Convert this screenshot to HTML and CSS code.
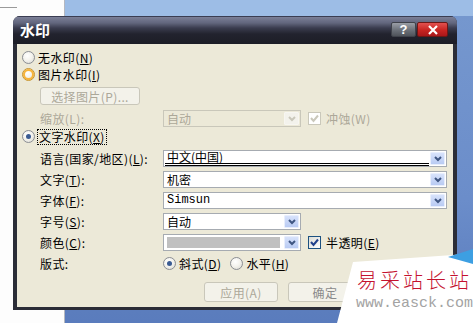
FILE: index.html
```html
<!DOCTYPE html>
<html lang="zh-CN">
<head>
<meta charset="utf-8">
<title>水印</title>
<link rel="stylesheet" href="styles.css">
</head>
<body>
<div class="desk">
  <div class="bgwin"><div class="bgline"></div></div>

  <div class="dialog">
    <div class="titlebar">
      <span class="title">水印</span>
      <div class="tbtns">
        <span class="tb help">?</span>
        <span class="tb close">
          <svg width="12" height="10" viewBox="0 0 12 10"><path d="M2 1 L10 9 M10 1 L2 9" stroke="#fff" stroke-width="2.2"/></svg>
        </span>
      </div>
    </div>

    <div class="body">
      <div class="row radio-row"><span class="radio"></span><span>无水印(<u>N</u>)</span></div>
      <div class="row radio-row"><span class="radio hover"></span><span>图片水印(<u>I</u>)</span></div>
      <div class="pic-row"><span class="btn disabled pic-btn">选择图片(P)...</span></div>

      <div class="row form-row scale-row">
        <span class="lbl dis-text">缩放(L):</span>
        <span class="combo narrow disabled"><span class="val dis-text">自动</span><span class="arrow"><svg width="8" height="6" viewBox="0 0 8 6"><path d="M1 1 L4 4 L7 1" fill="none" stroke="#c9c7ba" stroke-width="2"/></svg></span></span>
        <span class="check disabled"><svg width="11" height="11" viewBox="0 0 11 11"><path d="M2 5 L4.5 8 L9 2.5" fill="none" stroke="#cac8bb" stroke-width="2"/></svg></span>
        <span class="dis-text">冲蚀(W)</span>
      </div>

      <div class="row radio-row text-wm"><span class="radio checked"></span><span class="focus">文字水印(<u>X</u>)</span></div>

      <div class="form">
        <div class="row form-row">
          <span class="lbl">语言(国家/地区)(<u>L</u>):</span>
          <span class="combo wide"><span class="val dbl">中文(中国)</span><span class="arrow"><svg width="8" height="6" viewBox="0 0 8 6"><path d="M1 1 L4 4 L7 1" fill="none" stroke="#3f5682" stroke-width="2"/></svg></span></span>
        </div>
        <div class="row form-row">
          <span class="lbl">文字(<u>T</u>):</span>
          <span class="combo wide"><span class="val">机密</span><span class="arrow"><svg width="8" height="6" viewBox="0 0 8 6"><path d="M1 1 L4 4 L7 1" fill="none" stroke="#3f5682" stroke-width="2"/></svg></span></span>
        </div>
        <div class="row form-row">
          <span class="lbl">字体(<u>F</u>):</span>
          <span class="combo wide"><span class="val mono">Simsun</span><span class="arrow"><svg width="8" height="6" viewBox="0 0 8 6"><path d="M1 1 L4 4 L7 1" fill="none" stroke="#3f5682" stroke-width="2"/></svg></span></span>
        </div>
        <div class="row form-row">
          <span class="lbl">字号(<u>S</u>):</span>
          <span class="combo narrow"><span class="val">自动</span><span class="arrow"><svg width="8" height="6" viewBox="0 0 8 6"><path d="M1 1 L4 4 L7 1" fill="none" stroke="#3f5682" stroke-width="2"/></svg></span></span>
        </div>
        <div class="row form-row">
          <span class="lbl">颜色(<u>C</u>):</span>
          <span class="combo narrow"><span class="swatch"></span><span class="arrow"><svg width="8" height="6" viewBox="0 0 8 6"><path d="M1 1 L4 4 L7 1" fill="none" stroke="#3f5682" stroke-width="2"/></svg></span></span>
          <span class="check"><svg width="11" height="11" viewBox="0 0 11 11"><path d="M2 5 L4.5 8 L9 2.5" fill="none" stroke="#21418c" stroke-width="2"/></svg></span>
          <span>半透明(<u>E</u>)</span>
        </div>
        <div class="row form-row">
          <span class="lbl">版式:</span>
          <span class="radio checked"></span><span class="opt1">斜式(<u>D</u>)</span>
          <span class="radio"></span><span>水平(<u>H</u>)</span>
        </div>
      </div>

      <div class="buttons">
        <span class="btn disabled">应用(A)</span>
        <span class="btn ok">确定</span>
      </div>
    </div>
  </div>

  <div class="wm">
    <div class="wm-white"></div>
    <div class="wm-tri"></div>
    <div class="wm-text">
      <div class="wm-cn">易采站长站</div>
      <div class="wm-url">www.easck.com</div>
    </div>
  </div>
</div>
</body>
</html>
```

FILE: styles.css
```css
* { box-sizing: border-box; }
html, body { margin: 0; padding: 0; }
body {
  width: 473px; height: 323px; overflow: hidden;
  font-family: "Noto Sans CJK SC", "Noto Sans", sans-serif;
  font-size: 12px; color: #000;
}
u { text-decoration: underline; text-underline-offset: 1px; }

.desk {
  position: relative; width: 473px; height: 323px; overflow: hidden;
  background: linear-gradient(#9dbde6 0, #9dbde6 16px, #7597ce 16px, #6b8dca 200px, #5b7dbd 310px, #5a7cbd 323px);
}
.bgwin {
  position: absolute; left: 0; top: 0; width: 65px; height: 323px;
  background: #fdfdfd; border-right: 1px solid #b5b8c0;
}
.bgline { position: absolute; left: 0; top: 7px; width: 17px; height: 1px; background: #9a9a9a; }

.dialog {
  position: absolute; left: 13px; top: 16px; width: 444px; height: 294px;
  display: flex; flex-direction: column;
  background: #2b2d37; border-radius: 7px 7px 0 0;
}
.titlebar {
  height: 28px; flex: none; display: flex; justify-content: space-between; align-items: flex-start;
  border-radius: 7px 7px 0 0;
  background: linear-gradient(#3a3d52 0, #3a3d52 1px, #7b7f97 1px, #62667d 7px, #3a3c4e 12px, #22232e 18px, #1c1d26 28px);
}
.title {
  color: #fff; font-weight: bold; font-size: 15px; line-height: 28px; padding-left: 7px;
}
.tbtns { display: flex; gap: 1px; margin-top: 6px; margin-right: 9px; }
.tb {
  height: 15px; display: flex; align-items: center; justify-content: center;
  color: #fff; font-weight: bold; font-family: "Liberation Sans", sans-serif; font-size: 13px;
  border-radius: 2px;
}
.help { width: 25px; background: linear-gradient(#9a9ea6, #6b7078 55%, #4f535a); border: 1px solid #3f424a; }
.close { width: 31px; background: linear-gradient(#e2514f, #c82421 55%, #a8171a); border: 1px solid #6d1715; }

.body {
  flex: 1; margin: 0 4px 3px; background: #ece9d8;
  padding: 5px 0 0 5px; display: flex; flex-direction: column;
  letter-spacing: 0.4px;
}
.row { display: flex; align-items: center; height: 17px; }
.radio-row .radio { margin-right: 3px; }

.radio {
  flex: none; position: relative; width: 13px; height: 13px; border-radius: 50%;
  border: 1px solid #8b8e94;
  background: radial-gradient(circle at 40% 35%, #ffffff 0, #f4f3ee 45%, #d8d7cf 100%);
}
.radio.hover { box-shadow: inset 0 0 0 2px #f8b43a; border-color: #c9952e; }
.radio.checked::after {
  content: ""; position: absolute; left: 3px; top: 3px; width: 5px; height: 5px; border-radius: 50%;
  background: #3a5b92;
}

.pic-row { margin-top: 4px; padding-left: 18px; display: flex; }
.btn {
  display: flex; align-items: center; justify-content: center;
  border: 1px solid #c9c7ba; border-radius: 3px; background: #f3f2ea;
  height: 20px; width: 74px;
}
.pic-btn { width: 100px; height: 18px; }
.btn.disabled, .dis-text { color: #aca899; }

.scale-row { margin-top: 5px; }
.text-wm { margin-top: 1px; }
.focus { outline: 1px dotted #000; outline-offset: 0; padding: 0 1px; line-height: 14px; }

.form { margin-top: 5px; display: flex; flex-direction: column; gap: 4px; }
.lbl { width: 123px; margin-left: 18px; flex: none; white-space: nowrap; }

.combo {
  position: relative; height: 17px; background: #fff; border: 1px solid #a6abb1;
  display: flex; align-items: center; padding-left: 3px; flex: none; letter-spacing: 0;
}
.combo.wide { width: 284px; }
.combo.narrow { width: 138px; }
.combo.disabled { background: #ece9d8; border-color: #c9c7ba; }
.val { line-height: 15px; white-space: nowrap; }
.val.dbl {
  flex: none; width: 264px; align-self: stretch; margin-left: -2px; padding-left: 2px;
  line-height: 11px; border-bottom: 3px double #000;
}
.mono { font-family: "Liberation Mono", monospace; font-size: 12px; }
.swatch { width: 113px; height: 11px; background: #c0c0c0; }
.arrow {
  position: absolute; right: 1px; top: 1px; width: 15px; height: 13px;
  display: flex; align-items: center; justify-content: center;
  background: linear-gradient(#d7e2fb, #b9cbf3); border: 1px solid #e8eefc; border-radius: 1px;
}
.combo.disabled .arrow { background: #f3f2ec; border-color: #f7f6f1; }

.check {
  flex: none; width: 13px; height: 13px; margin: 0 5px 0 7px;
  border: 1px solid #1c5180; background: linear-gradient(135deg, #dcdcd5, #fff);
  display: flex; align-items: center; justify-content: center;
}
.check.disabled { border-color: #cac8bb; background: #fff; }

.form-row .radio + span { margin-left: 3px; }
.opt1 { margin-right: 9px; }

.buttons { margin-top: 10px; margin-left: 182px; display: flex; gap: 10px; }
.btn.ok { color: #8a8a8a; }

.wm { position: absolute; left: 330px; top: 245px; width: 143px; height: 78px; }
.wm-white {
  position: absolute; inset: 0; background: #fff;
  clip-path: polygon(23px 17px, 123px 10px, 143px 8px, 143px 78px, 7px 78px);
}
.wm-tri {
  position: absolute; inset: 0; background: #3d9fe2;
  clip-path: polygon(118px 12px, 143px 4px, 143px 19px);
}
.wm-text { position: relative; padding: 22px 0 0 27px; display: flex; flex-direction: column; }
.wm-cn {
  color: #c4122f; font-size: 20px; line-height: 26px; letter-spacing: 3px; font-weight: 300;
  white-space: nowrap;
}
.wm-url {
  color: #a3a3a3; font-family: "Liberation Mono", monospace; font-size: 15px; line-height: 16px;
  margin-top: 3px; margin-left: -1px; white-space: nowrap;
}
```
